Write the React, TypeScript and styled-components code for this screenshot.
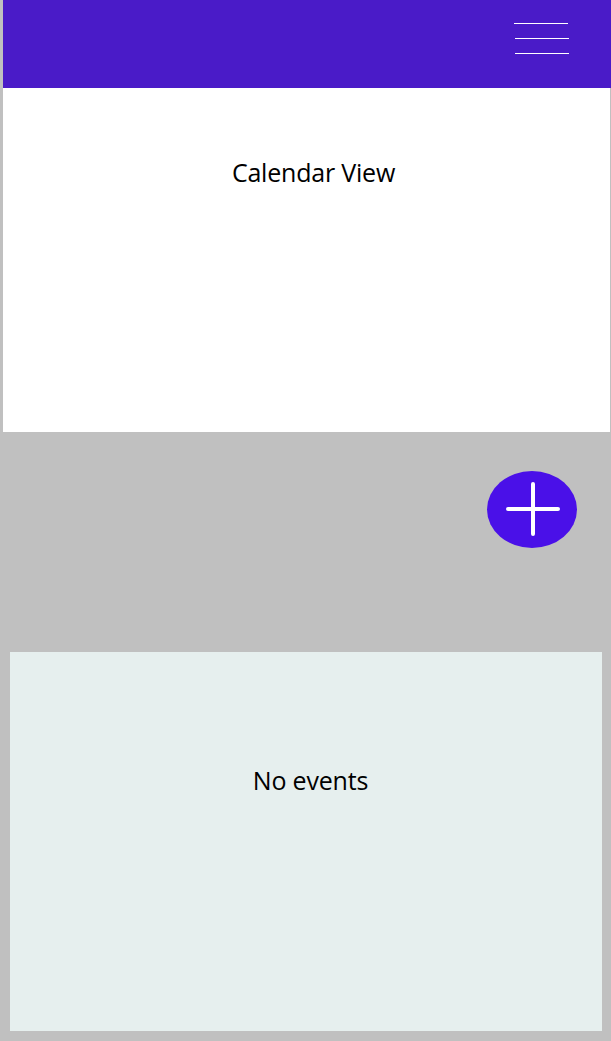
import React from "react";
import styled, { createGlobalStyle } from "styled-components";

const Global = createGlobalStyle`
  html, body { margin: 0; padding: 0; background: #c0c0c0; }
  body { font-family: "Open Sans", "Liberation Sans", sans-serif; }
`;

const Page = styled.div`
  width: 611px;
  height: 1041px;
  display: flex;
  flex-direction: column;
  background: #c0c0c0;
  overflow: hidden;
`;

const Header = styled.header`
  height: 88px;
  margin-left: 3px;
  background: #4a1bc8;
  display: flex;
  justify-content: flex-end;
  align-items: flex-start;
  padding: 23px 42px 0 0;
  box-sizing: border-box;
`;

const Burger = styled.button`
  width: 55px;
  height: 32px;
  padding: 0;
  border: 0;
  background: transparent;
  display: flex;
  flex-direction: column;
  gap: 14px;
  cursor: pointer;
`;

const BurgerLine = styled.span<{ $offset: number }>`
  display: block;
  width: 54px;
  height: 1px;
  background: #ffffff;
  margin-left: ${(p) => p.$offset}px;
`;

const CalendarPanel = styled.section`
  height: 344px;
  margin: 0 1px 0 3px;
  background: #ffffff;
  display: flex;
  justify-content: center;
  padding: 69px 0 0 14px;
  box-sizing: border-box;
`;

const Title = styled.div`
  font-size: 25px;
  color: #000000;
  line-height: 30px;
  height: 30px;
  letter-spacing: -0.2px;
`;

const FabRow = styled.div`
  height: 220px;
  display: flex;
  justify-content: flex-end;
  align-items: flex-start;
  padding: 39px 34px 0 0;
  box-sizing: border-box;
`;

const Fab = styled.button`
  width: 90px;
  height: 77px;
  border-radius: 50%;
  border: 0;
  padding: 0;
  background: #4a10e8;
  display: flex;
  align-items: center;
  justify-content: center;
  cursor: pointer;
`;

const EventsPanel = styled.section`
  height: 379px;
  margin: 0 9px 10px 10px;
  background: #e6efee;
  display: flex;
  justify-content: center;
  padding: 113px 0 0 9px;
  box-sizing: border-box;
`;

export default function App() {
  return (
    <>
      <Global />
      <Page>
        <Header>
          <Burger aria-label="menu">
            <BurgerLine $offset={0} />
            <BurgerLine $offset={1} />
            <BurgerLine $offset={1} />
          </Burger>
        </Header>
        <CalendarPanel>
          <Title>Calendar View</Title>
        </CalendarPanel>
        <FabRow>
          <Fab aria-label="add">
            <svg width="54" height="54" viewBox="0 0 54 54" style={{ marginLeft: 2, marginTop: -2 }}>
              <path
                d="M27 2 V52 M2 27 H52"
                stroke="#fff"
                strokeWidth="4"
                strokeLinecap="round"
                fill="none"
              />
            </svg>
          </Fab>
        </FabRow>
        <EventsPanel>
          <Title>No events</Title>
        </EventsPanel>
      </Page>
    </>
  );
}
